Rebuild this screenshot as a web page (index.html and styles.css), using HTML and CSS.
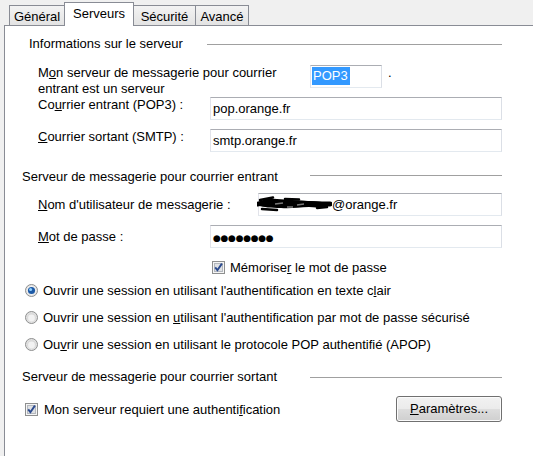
FILE: index.html
```html
<!DOCTYPE html>
<html lang="fr">
<head>
<meta charset="utf-8">
<title>Serveurs</title>
<link rel="stylesheet" href="styles.css">
</head>
<body>
<div class="tabs">
  <div class="tab tab-first">Général</div>
  <div class="tab tab-active">Serveurs</div>
  <div class="tab tab-sec">Sécurité</div>
  <div class="tab tab-last">Avancé</div>
</div>
<div class="panel">
  <div class="form">
    <div class="group g1"><span class="gt">Informations sur le serveur</span><span class="gl"></span></div>

    <div class="row r-type">
      <span class="lbl lbl-type"><span class="ln">M<u>o</u>n serveur de messagerie pour courrier</span><span class="ln">entrant est un serveur</span></span>
      <span class="combo"><span class="sel">POP3</span></span>
      <span class="dot">.</span>
    </div>

    <div class="row r-in">
      <span class="lbl">Co<u>u</u>rrier entrant (POP3) :</span>
      <span class="field">pop.orange.fr</span>
    </div>

    <div class="row r-out">
      <span class="lbl"><u>C</u>ourrier sortant (SMTP) :</span>
      <span class="field">smtp.orange.fr</span>
    </div>

    <div class="group g2"><span class="gt">Serveur de messagerie pour courrier entrant</span><span class="gl"></span></div>

    <div class="row r-user">
      <span class="lbl lbl-user lbl-mid"><u>N</u>om d'utilisateur de messagerie :</span>
      <span class="field field-user"><svg class="scribble" width="75" height="18" viewBox="0 0 75 18"><path d="M2 7 C6 4 12 3 20 4 C30 5 40 5 50 6 C60 6 68 7 74 9 C70 12 62 13 52 12 C42 12 34 14 24 13 C14 13 6 12 2 11 Z" fill="#000"/><path d="M1 9 C10 6 22 8 34 8 S58 9 73 9" stroke="#000" stroke-width="5" fill="none" stroke-linecap="round"/><path d="M3 5 L16 2.5 M5 14 L20 15 M28 4 L42 4.5 M60 13 L70 12" stroke="#000" stroke-width="2.5" fill="none" stroke-linecap="round"/><path d="M18 9 L26 8 M40 10 L47 9 M30 12 L36 12" stroke="#7a7a7a" stroke-width="1.4" fill="none"/></svg>@orange.fr</span>
    </div>

    <div class="row r-pass">
      <span class="lbl lbl-mid"><u>M</u>ot de passe :</span>
      <span class="field"><span class="dots">●●●●●●●●</span></span>
    </div>

    <div class="check-row r-remember">
      <svg class="cb" width="13" height="13" viewBox="0 0 13 13"><rect x="0.5" y="0.5" width="12" height="12" fill="#f5f5f5" stroke="#8e8f8f"/><rect x="2.5" y="2.5" width="8" height="8" fill="#dfe1e4" stroke="#b4b8be"/><path d="M3.2 6.4 L5.4 9.2 L9.9 2.6" stroke="#2b4a8e" stroke-width="1.9" fill="none"/></svg>
      <span>Mémorise<u>r</u> le mot de passe</span>
    </div>

    <div class="opt r-opt1">
      <svg class="rb" width="13" height="13" viewBox="0 0 13 13"><circle cx="6.5" cy="6.5" r="6" fill="#e6e6e6" stroke="#8e8f8f"/><circle cx="6.5" cy="6.5" r="4.3" fill="#f4f4f4"/><circle cx="6.5" cy="6.5" r="3.6" fill="#1d5aa6"/><circle cx="5.6" cy="5.5" r="1.5" fill="#8fd0ff"/></svg>
      <span>Ouvrir une session en utilisant l'authentification en texte c<u>l</u>air</span>
    </div>

    <div class="opt r-opt">
      <svg class="rb" width="13" height="13" viewBox="0 0 13 13"><circle cx="6.5" cy="6.5" r="6" fill="#e1e1e1" stroke="#8e8f8f"/><circle cx="6.5" cy="6.5" r="4.3" fill="#d8d8d8"/><circle cx="6.5" cy="7" r="3.4" fill="#f2f2f2"/></svg>
      <span>Ouvrir une session en <u>u</u>tilisant l'authentification par mot de passe sécurisé</span>
    </div>

    <div class="opt r-opt">
      <svg class="rb" width="13" height="13" viewBox="0 0 13 13"><circle cx="6.5" cy="6.5" r="6" fill="#e1e1e1" stroke="#8e8f8f"/><circle cx="6.5" cy="6.5" r="4.3" fill="#d8d8d8"/><circle cx="6.5" cy="7" r="3.4" fill="#f2f2f2"/></svg>
      <span>Ou<u>v</u>rir une session en utilisant le protocole POP authentifié (APOP)</span>
    </div>

    <div class="group g3"><span class="gt">Serveur de messagerie pour courrier sortant</span><span class="gl"></span></div>

    <div class="auth-row">
      <svg class="cb" width="13" height="13" viewBox="0 0 13 13"><rect x="0.5" y="0.5" width="12" height="12" fill="#f5f5f5" stroke="#8e8f8f"/><rect x="2.5" y="2.5" width="8" height="8" fill="#dfe1e4" stroke="#b4b8be"/><path d="M3.2 6.4 L5.4 9.2 L9.9 2.6" stroke="#2b4a8e" stroke-width="1.9" fill="none"/></svg>
      <span>Mon serveur requiert une authenti<u>f</u>ication</span>
      <span class="btn"><u>P</u>aramètres...</span>
    </div>
  </div>
</div>
</body>
</html>
```
FILE: styles.css
```css
html, body {
  margin: 0;
  padding: 0;
}
body {
  background: #f0f0f0;
  font-family: "Liberation Sans", Arial, sans-serif;
  font-size: 13px;
  color: #000;
  width: 533px;
  height: 456px;
  overflow: hidden;
}
u { text-decoration: underline; text-underline-offset: 1px; }

.tabs {
  display: flex;
  align-items: flex-end;
  height: 25px;
  padding-left: 9px;
}
.tab {
  box-sizing: border-box;
  height: 20px;
  padding-top: 2px;
  line-height: 17px;
  text-align: center;
  border: 1px solid #898c95;
  border-bottom: none;
  background: linear-gradient(#f3f3f3, #e3e3e3);
  white-space: nowrap;
}
.tab-first { width: 55px; border-right: none; }
.tab-active {
  width: 70px;
  height: 24px;
  margin-bottom: -1px;
  background: #fff;
  position: relative;
  z-index: 1;
}
.tab-sec { width: 62px; border-left: none; }
.tab-last { width: 53px; border-left: none; }

.panel {
  box-sizing: border-box;
  margin-left: 4px;
  height: 431px;
  background: #fff;
  border-top: 1px solid #898c95;
  border-left: 1px solid #898c95;
}
.form {
  width: 480px;
  padding-left: 17px;
  padding-top: 10px;
}

.group {
  display: flex;
  height: 16px;
  line-height: 16px;
  white-space: nowrap;
}
.gl {
  flex: 1;
  height: 1px;
  background: #a0a0a0;
  margin-top: 8px;
}
.g1 { padding-left: 7px; }
.g1 .gt { width: 178px; }
.g2 { margin-top: 17px; }
.g2 .gt, .g3 .gt { width: 288px; }
.g2 .gl { margin-top: 6px; }
.g3 { margin-top: 17px; }

.row {
  display: flex;
  align-items: flex-start;
  padding-left: 16px;
}
.lbl {
  flex: none;
  width: 172px;
  line-height: 16px;
}
.ln { display: block; white-space: nowrap; }
.lbl-mid { padding-top: 4px; }
.lbl-type { width: 272px; height: 32px; }
.lbl-user { width: 220px; }

.r-type { margin-top: 13px; }
.r-in { margin-top: 0; }
.r-out { margin-top: 9px; }
.r-user { margin-top: 8px; }
.r-pass { margin-top: 9px; }

.field {
  flex: 1;
  box-sizing: border-box;
  height: 23px;
  border: 1px solid;
  border-color: #abadb3 #dbdfe6 #e3e9ef #e2e3ea;
  padding-left: 2px;
  line-height: 21px;
  white-space: nowrap;
  overflow: hidden;
}
.field-user {
  overflow: visible;
  display: flex;
  align-items: center;
}
.scribble {
  flex: none;
  margin-left: -4px;
  margin-top: -2px;
}
.dots {
  font-family: "DejaVu Sans", sans-serif;
  font-size: 9px;
  letter-spacing: -0.3px;
}

.combo {
  flex: none;
  box-sizing: border-box;
  width: 72px;
  height: 23px;
  border: 1px solid;
  border-color: #abadb3 #dbdfe6 #e3e9ef #e2e3ea;
  padding: 1px 0 0 1px;
}
.sel {
  display: inline-block;
  background: #3399ff;
  color: #fff;
  line-height: 18px;
  padding: 0 2px 0 1px;
}
.dot {
  margin-left: 6px;
  line-height: 16px;
}

.check-row {
  display: flex;
  align-items: center;
  height: 16px;
  padding-left: 190px;
  gap: 5px;
  margin-top: 11px;
}
.opt {
  display: flex;
  align-items: center;
  height: 16px;
  padding-left: 3px;
  gap: 5px;
  margin-top: 11px;
  white-space: nowrap;
}
.r-opt1 { margin-top: 7px; }

.auth-row {
  display: flex;
  align-items: center;
  height: 26px;
  padding-left: 3px;
  gap: 6px;
  margin-top: 11px;
}
.cb, .rb { flex: none; display: block; }
.btn {
  margin-left: auto;
  box-sizing: border-box;
  width: 106px;
  height: 26px;
  border: 1px solid #707070;
  border-radius: 3px;
  background: linear-gradient(#f2f2f2 0%, #ebebeb 48%, #dddddd 52%, #cfcfcf 100%);
  box-shadow: inset 0 0 0 1px #fbfbfb;
  text-align: center;
  line-height: 24px;
}
```
